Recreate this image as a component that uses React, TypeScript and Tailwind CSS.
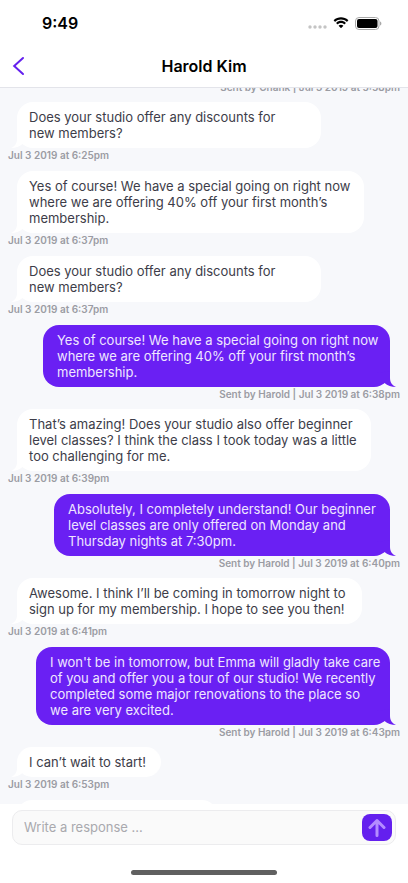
import clsx from 'clsx';

interface MessageType {
  id: number;
  own?: boolean;
  text?: string;
  meta?: string;
  width?: string;
}

const messages: MessageType[] = [
  { id: 0, own: true, meta: 'Sent by Chank | Jul 3 2019 at 5:58pm' },
  {
    id: 1,
    text: 'Does your studio offer any discounts for\nnew members?',
    meta: 'Jul 3 2019 at 6:25pm',
    width: 'w-[304px]',
  },
  {
    id: 2,
    text: 'Yes of course! We have a special going on right now\nwhere we are offering 40% off your first month’s\nmembership.',
    meta: 'Jul 3 2019 at 6:37pm',
    width: 'w-[347px]',
  },
  {
    id: 3,
    text: 'Does your studio offer any discounts for\nnew members?',
    meta: 'Jul 3 2019 at 6:37pm',
    width: 'w-[304px]',
  },
  {
    id: 4,
    own: true,
    text: 'Yes of course! We have a special going on right now\nwhere we are offering 40% off your first month’s\nmembership.',
    meta: 'Sent by Harold | Jul 3 2019 at 6:38pm',
    width: 'w-[347px]',
  },
  {
    id: 5,
    text: 'That’s amazing! Does your studio also offer beginner\nlevel classes? I think the class I took today was a little\ntoo challenging for me.',
    meta: 'Jul 3 2019 at 6:39pm',
    width: 'w-[354px]',
  },
  {
    id: 6,
    own: true,
    text: 'Absolutely, I completely understand! Our beginner\nlevel classes are only offered on Monday and\nThursday nights at 7:30pm.',
    meta: 'Sent by Harold | Jul 3 2019 at 6:40pm',
    width: 'w-[336px]',
  },
  {
    id: 7,
    text: 'Awesome. I think I’ll be coming in tomorrow night to\nsign up for my membership. I hope to see you then!',
    meta: 'Jul 3 2019 at 6:41pm',
    width: 'w-[345px]',
  },
  {
    id: 8,
    own: true,
    text: "I won't be in tomorrow, but Emma will gladly take care\nof you and offer you a tour of our studio! We recently\ncompleted some major renovations to the place so\nwe are very excited.",
    meta: 'Sent by Harold | Jul 3 2019 at 6:43pm',
    width: 'w-[354px]',
  },
  {
    id: 9,
    text: 'I can’t wait to start!',
    meta: 'Jul 3 2019 at 6:53pm',
    width: 'w-[144px]',
  },
  { id: 10, text: ' ', width: 'w-[200px]' },
];

function StatusBar() {
  return (
    <div className="flex h-11 items-center justify-between pt-0.5 pr-[26px] pl-[42px]">
      <span className="text-base font-semibold">9:49</span>
      <div className="flex items-center gap-1.5">
        <svg width="19" height="4" viewBox="0 0 19 4" className="mt-2 fill-[#c4c4c4]">
          <circle cx="2" cy="2" r="1.7" />
          <circle cx="7" cy="2" r="1.7" />
          <circle cx="12" cy="2" r="1.7" />
          <circle cx="17" cy="2" r="1.7" />
        </svg>
        <svg width="16" height="12" viewBox="0 0 16 12">
          <path
            d="M8 2.4c2.2 0 4.2.9 5.7 2.3.1.1.3.1.4 0L15.2 3.6c.1-.1.1-.3 0-.5C11.2-.7 4.8-.7.8 3.1c-.1.1-.1.3 0 .5l1.1 1.1c.1.1.3.1.4 0C3.8 3.3 5.8 2.4 8 2.4Zm0 3.700c1.2 0 2.3.4 3.2 1.2.1.1.3.1.4 0l1.1-1.1c.1-.1.1-.4 0-.5-2.7-2.5-6.7-2.5-9.4 0-.1.1-.1.4 0 .5l1.1 1.1c.1.1.3.1.4 0 .9-.8 2-1.2 3.2-1.2Zm2.2 2.5c.1.1.1.3 0 .4L8.2 11c-.1.1-.3.1-.4 0L5.8 9c-.1-.1-.1-.3 0-.4 1.3-1.1 3.1-1.1 4.4 0Z"
            fill="#000"
          />
        </svg>
        <svg width="27" height="13" viewBox="0 0 27 13">
          <rect x="0.5" y="0.5" width="23.5" height="12" rx="3.5" fill="none" stroke="#a8a8a8" />
          <rect x="2" y="2" width="20.5" height="9" rx="2" fill="#000" />
          <path d="M25 4.500v4c.8-.3 1.400-1.100 1.400-2s-.6-1.700-1.400-2Z" fill="#a8a8a8" />
        </svg>
      </div>
    </div>
  );
}

function Header() {
  return (
    <header className="shrink-0 border-b border-[#e3e4ea] bg-white">
      <StatusBar />
      <div className="relative flex h-[43px] items-center justify-center">
        <button type="button" aria-label="Back" className="absolute left-2 p-1">
          <svg width="13" height="20" viewBox="0 0 13 20" fill="none" stroke="#6420ee" strokeWidth="2">
            <path d="M11 2 2.200 10l8.800 8" strokeLinecap="round" />
          </svg>
        </button>
        <h1 className="text-base font-semibold">Harold Kim</h1>
      </div>
    </header>
  );
}

function Tail({ own }: { own?: boolean }) {
  return (
    <svg
      width="20"
      height="16"
      viewBox="0 0 20 16"
      className={clsx(
        'absolute bottom-0',
        own ? '-right-1.5 fill-[#6a20f3]' : '-left-1.5 -scale-x-100 fill-white',
      )}
    >
      <path d="M0 2 14 0v7c0 4 2 7.500 6 9-4.500 0-8.500-1.200-11.500-4C6 13.500 4 13.500 0 12Z" />
    </svg>
  );
}

function Message({ own, text, meta, width }: MessageType) {
  return (
    <li className={clsx('flex flex-col', own ? 'items-end pb-2' : 'items-start pb-[9px]')}>
      {text && (
        <div
          className={clsx(
            'relative min-h-[30px] rounded-2xl py-[7px] text-[13px] leading-4 whitespace-pre',
            own ? 'mr-2.5 bg-[#6a20f3] pl-3.5 text-[#efe6ff]' : 'ml-[9px] bg-white pl-3 text-[#3d3d49]',
            width,
          )}
        >
          <Tail own={own} />
          <p className="relative">{text}</p>
        </div>
      )}
      {meta && <span className="text-[10px] leading-[14px] font-semibold text-[#9b9ca3]">{meta}</span>}
    </li>
  );
}

export default function App() {
  return (
    <div className="flex h-screen flex-col bg-white font-['Inter',sans-serif] text-black">
      <Header />
      <main className="min-h-0 flex-1 overflow-hidden bg-[#f7f8fb] px-2">
        <ul className="-mt-2">
          {messages.map((message) => (
            <Message key={message.id} {...message} />
          ))}
        </ul>
      </main>
      <footer className="shrink-0 px-3 pt-1.5 pb-2">
        <form className="flex h-[35px] items-center rounded-[10px] border border-[#ececee] bg-[#fafafa] pr-[3px] pl-[11px]">
          <input
            type="text"
            aria-label="Write a response"
            placeholder="Write a response ..."
            className="min-w-0 flex-1 bg-transparent text-[13px] outline-none placeholder:text-[#a9a9ae]"
          />
          <button
            type="button"
            aria-label="Send"
            className="flex h-[27px] w-[30px] items-center justify-center rounded-lg bg-[#6420ee]"
          >
            <svg width="18" height="19" viewBox="0 0 18 19" fill="none" stroke="#b48cff" strokeWidth="3">
              <path d="M9 17.500V2.500M2 9.500l7-7 7 7" strokeLinecap="round" strokeLinejoin="round" />
            </svg>
          </button>
        </form>
        <div className="mx-auto mt-[25px] h-[5px] w-[146px] rounded-full bg-[#606060]" />
      </footer>
    </div>
  );
}
